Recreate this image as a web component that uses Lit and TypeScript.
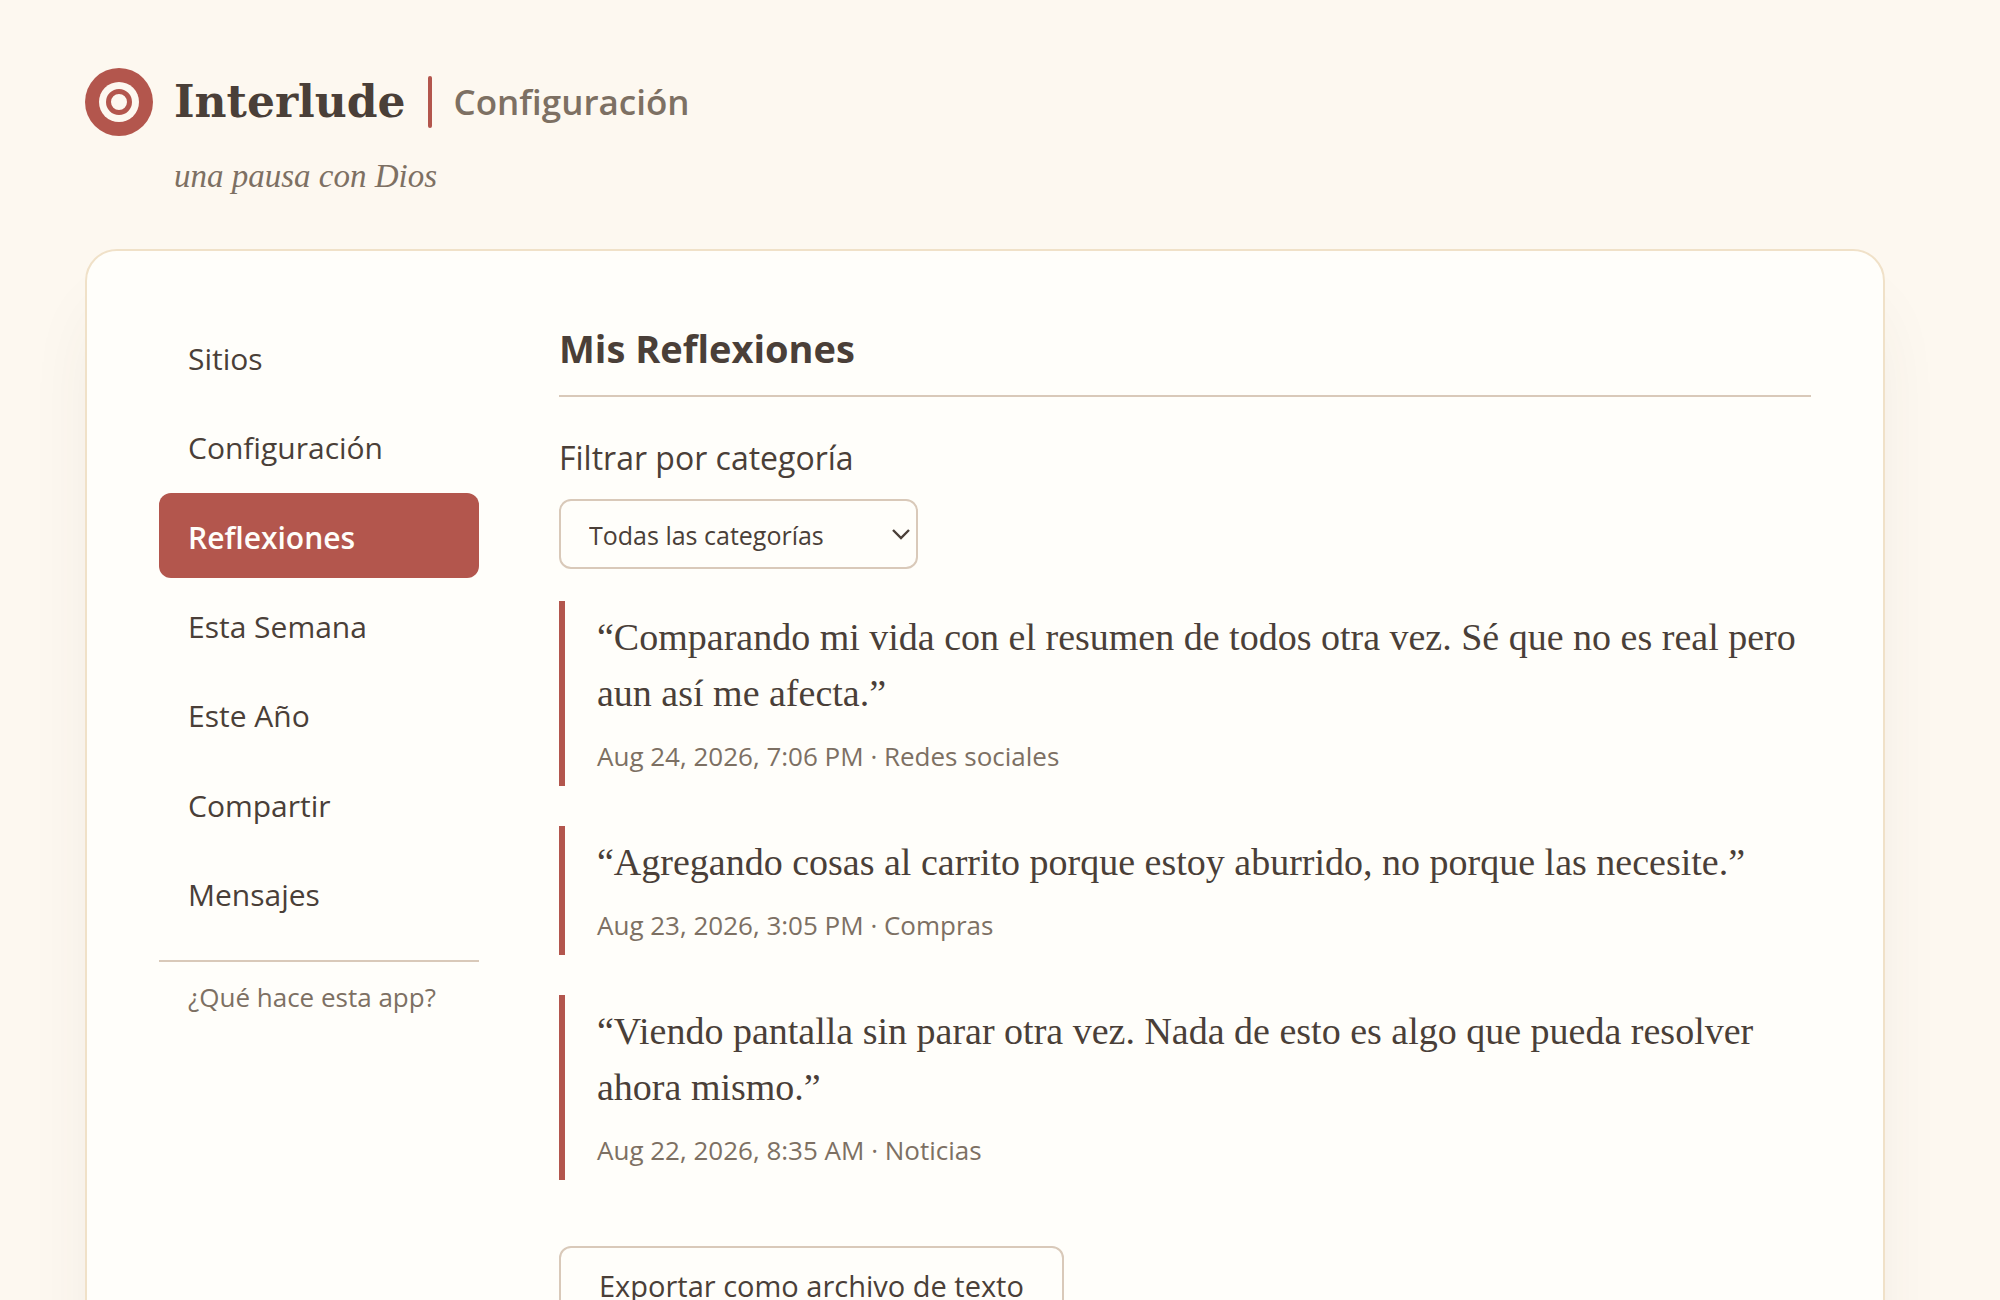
import { LitElement, html, css } from "lit";
import { customElement, state } from "lit/decorators.js";
import { classMap } from "lit/directives/class-map.js";

interface Reflection {
  text: string;
  date: string;
  category: string;
}

const SECTIONS = ["Sitios", "Configuración", "Reflexiones", "Esta Semana", "Este Año", "Compartir", "Mensajes"];

const REFLECTIONS: Reflection[] = [
  {
    text: "Comparando mi vida con el resumen de todos otra vez. Sé que no es real pero aun así me afecta.",
    date: "Aug 24, 2026, 7:06 PM",
    category: "Redes sociales",
  },
  {
    text: "Agregando cosas al carrito porque estoy aburrido, no porque las necesite.",
    date: "Aug 23, 2026, 3:05 PM",
    category: "Compras",
  },
  {
    text: "Viendo pantalla sin parar otra vez. Nada de esto es algo que pueda resolver ahora mismo.",
    date: "Aug 22, 2026, 8:35 AM",
    category: "Noticias",
  },
];

@customElement("app-header")
export class AppHeader extends LitElement {
  static styles = css`
    :host {
      display: block;
    }
    .brand {
      display: grid;
      grid-template-columns: 68px 1fr;
      column-gap: 21px;
      row-gap: 16px;
      align-items: center;
    }
    .logo {
      display: block;
      width: 68px;
      height: 68px;
    }
    .line {
      display: flex;
      align-items: center;
      gap: 22px;
    }
    .name {
      margin: 0;
      font: bold 44px/68px "DejaVu Serif", Georgia, serif;
      color: var(--ink);
    }
    .bar {
      width: 4px;
      height: 52px;
      border-radius: 2px;
      background: var(--accent);
    }
    .page {
      font-size: 35px;
      line-height: 68px;
      font-weight: 600;
      color: var(--muted);
    }
    .tagline {
      grid-column: 2;
      margin: 0;
      font: italic 33px/48px "Liberation Serif", Georgia, serif;
      color: var(--muted);
    }
  `;

  render() {
    return html`
      <header class="brand">
        <svg class="logo" viewBox="0 0 68 68" aria-hidden="true">
          <circle cx="34" cy="34" r="34" fill="#b3564d" />
          <circle cx="34" cy="34" r="20" fill="#fdf8f0" />
          <circle cx="34" cy="34" r="10.5" fill="none" stroke="#b3564d" stroke-width="5" />
        </svg>
        <div class="line">
          <h1 class="name">Interlude</h1>
          <span class="bar"></span>
          <span class="page">Configuración</span>
        </div>
        <p class="tagline">una pausa con Dios</p>
      </header>
    `;
  }
}

@customElement("section-nav")
export class SectionNav extends LitElement {
  static styles = css`
    :host {
      display: block;
    }
    .list {
      display: grid;
      grid-auto-rows: 1fr;
      gap: 4px;
      min-height: 622px;
      margin: 0;
      padding: 0;
      list-style: none;
    }
    .item {
      display: flex;
    }
    .tab {
      flex: 1;
      padding: 4px 29px 0;
      border: 0;
      border-radius: 12px;
      background: none;
      color: var(--ink);
      font: inherit;
      font-size: 30px;
      line-height: 40px;
      text-align: left;
      cursor: pointer;
    }
    .tab.active {
      background: var(--accent);
      color: #fffefa;
      font-weight: 600;
    }
    .foot {
      margin-top: 24px;
      padding: 17px 29px;
      border-top: 2px solid var(--line);
    }
    .help {
      color: var(--muted);
      font-size: 26px;
      line-height: 36px;
      text-decoration: none;
    }
  `;

  @state() private active = "Reflexiones";

  render() {
    return html`
      <nav>
        <ul class="list">
          ${SECTIONS.map(
            (name) => html`
              <li class="item">
                <button
                  type="button"
                  class=${classMap({ tab: true, active: name === this.active })}
                  @click=${() => (this.active = name)}
                >
                  ${name}
                </button>
              </li>
            `
          )}
        </ul>
        <div class="foot"><a class="help" href="#ayuda">¿Qué hace esta app?</a></div>
      </nav>
    `;
  }
}

@customElement("reflection-list")
export class ReflectionList extends LitElement {
  static styles = css`
    :host {
      display: block;
    }
    .title {
      margin: 0 0 39px;
      padding: 8px 0 21px;
      border-bottom: 2px solid var(--line);
      font-size: 38px;
      line-height: 52px;
      font-weight: 700;
    }
    .label {
      display: block;
      margin-bottom: 19px;
      font-size: 32px;
      line-height: 44px;
    }
    .picker {
      display: inline-grid;
      width: 359px;
      max-width: 100%;
      align-items: center;
    }
    .select,
    .chevron {
      grid-area: 1 / 1;
    }
    .select {
      appearance: none;
      width: 100%;
      height: 70px;
      padding: 2px 48px 0 28px;
      border: 2px solid var(--line);
      border-radius: 12px;
      background: var(--card);
      color: var(--ink);
      font: inherit;
      font-size: 25px;
    }
    .chevron {
      justify-self: end;
      width: 20px;
      height: 12px;
      margin-right: 7px;
      pointer-events: none;
    }
    .entries {
      display: grid;
      gap: 40px;
      margin: 32px 0 66px;
      padding: 0;
      list-style: none;
    }
    .entry {
      padding: 8px 0 10px 32px;
      border-left: 6px solid var(--accent);
    }
    .quote {
      margin: 0 0 16px;
      font: 38px/56px "Liberation Serif", Georgia, serif;
    }
    .meta {
      margin: 0;
      color: var(--muted);
      font-size: 26px;
      line-height: 39px;
    }
    .export {
      padding: 14px 38px;
      border: 2px solid var(--line);
      border-radius: 12px;
      background: var(--card);
      color: var(--ink);
      font: inherit;
      font-size: 29px;
      line-height: 48px;
      cursor: pointer;
    }
  `;

  @state() private category = "";

  render() {
    const shown = REFLECTIONS.filter((r) => !this.category || r.category === this.category);
    return html`
      <h2 class="title">Mis Reflexiones</h2>
      <label class="label" for="category">Filtrar por categoría</label>
      <div class="picker">
        <select
          id="category"
          class="select"
          @change=${(e: Event) => (this.category = (e.target as HTMLSelectElement).value)}
        >
          <option value="">Todas las categorías</option>
          ${REFLECTIONS.map((r) => html`<option value=${r.category}>${r.category}</option>`)}
        </select>
        <svg class="chevron" viewBox="0 0 20 12" aria-hidden="true">
          <path d="M2 2l8 8 8-8" fill="none" stroke="#4a3f38" stroke-width="2.4" />
        </svg>
      </div>
      <ul class="entries">
        ${shown.map(
          (r) => html`
            <li class="entry">
              <p class="quote">${`“${r.text}”`}</p>
              <p class="meta">${`${r.date} · ${r.category}`}</p>
            </li>
          `
        )}
      </ul>
      <button type="button" class="export">Exportar como archivo de texto</button>
    `;
  }
}

@customElement("app-root")
export class AppRoot extends LitElement {
  static styles = css`
    :host {
      --accent: #b3564d;
      --ink: #4a3f38;
      --muted: #7d7063;
      --line: #d9c9b9;
      --card: #fffefa;
      display: block;
      box-sizing: border-box;
      min-height: 100vh;
      padding: 68px 115px 96px 85px;
      background: #fdf8f0;
      color: var(--ink);
      font-family: "Open Sans", "Noto Sans", sans-serif;
    }
    .page {
      max-width: 1800px;
      margin: 0 auto;
    }
    .card {
      display: grid;
      grid-template-columns: 320px minmax(0, 1fr);
      gap: 80px;
      margin-top: 49px;
      padding: 63px 72px 72px;
      border: 2px solid #f0e1c8;
      border-radius: 32px;
      background: var(--card);
      box-shadow: 0 48px 80px -24px rgba(74, 63, 56, 0.11);
    }
  `;

  render() {
    return html`
      <div class="page">
        <app-header></app-header>
        <main class="card">
          <section-nav></section-nav>
          <reflection-list></reflection-list>
        </main>
      </div>
    `;
  }
}
